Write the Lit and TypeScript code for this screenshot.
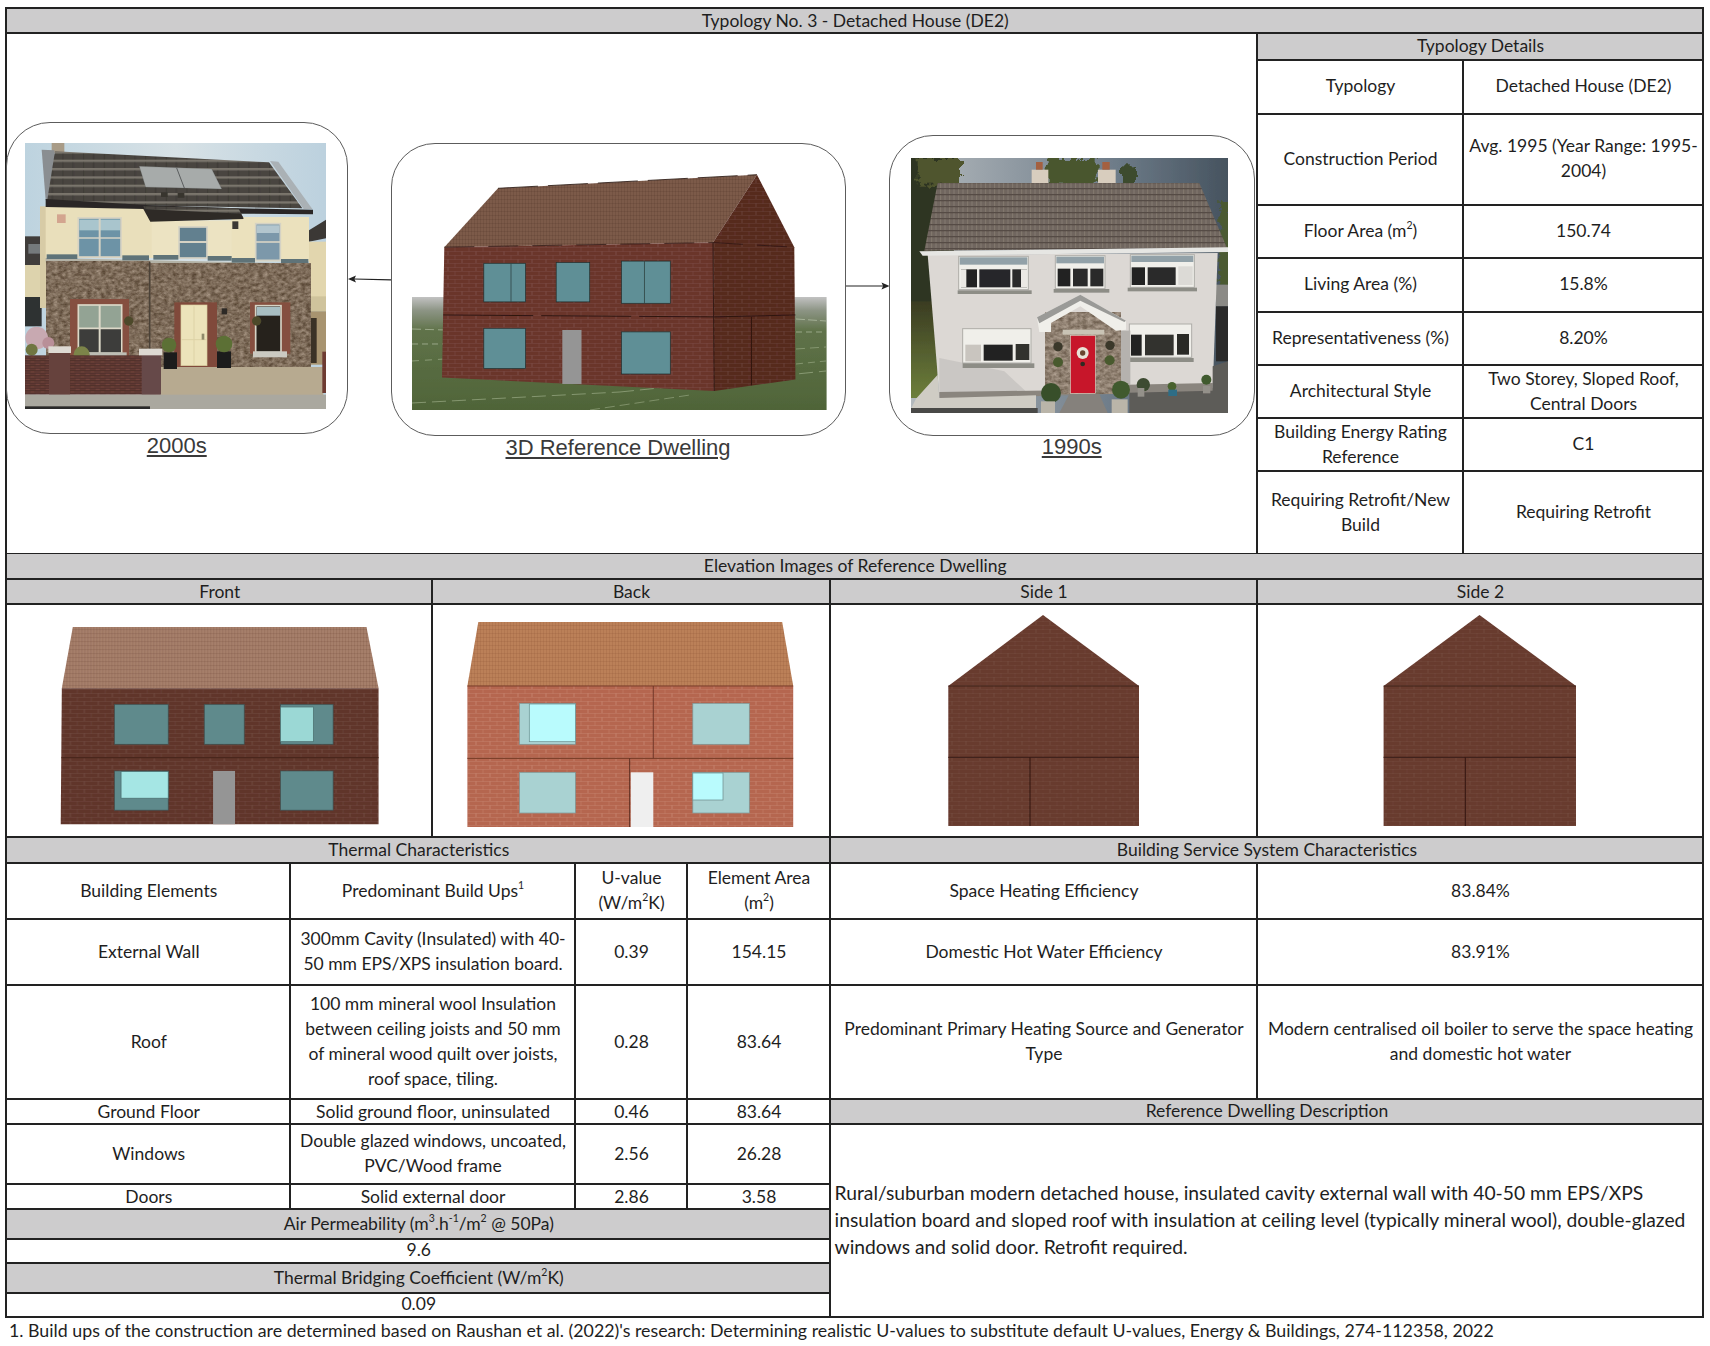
import { LitElement, css, html, svg } from 'lit'
import { customElement } from 'lit/decorators.js'

// small drawing helpers. Elevations and the model use page pixels as viewBox,
// the two photos use their own 3x grid so shapes could be read off the reference
const R = (x1: number, y1: number, x2: number, y2: number, fill: string, stroke = 'none', sw = 0.7) =>
  svg`<rect x=${x1} y=${y1} width=${x2 - x1} height=${y2 - y1} fill=${fill} stroke=${stroke} stroke-width=${sw} />`
const P = (pts: string, fill: string, stroke = 'none') =>
  svg`<polygon points=${pts} fill=${fill} stroke=${stroke} stroke-width="0.7" />`
const L = (x1: number, y1: number, x2: number, y2: number, color: string, w = 1, dash = '') =>
  svg`<line x1=${x1} y1=${y1} x2=${x2} y2=${y2} stroke=${color} stroke-width=${w} stroke-dasharray=${dash} />`
const C = (x: number, y: number, r: number, fill: string) => svg`<circle cx=${x} cy=${y} r=${r} fill=${fill} />`

const patterns = (id: string, mortar: string, tile: string) => svg`
  <defs>
    <pattern id="brick-${id}" width="14" height="8" patternUnits="userSpaceOnUse">
      <path d="M0 .5H14M0 4.5H14M7 .5V4.5M.5 4.5V8.5M13.5 4.5V8.5" stroke=${mortar} stroke-width="0.6" fill="none" />
    </pattern>
    <pattern id="tile-${id}" width="3" height="4" patternUnits="userSpaceOnUse">
      <path d="M.5 0V4M0 .5H3" stroke=${tile} stroke-width="0.6" fill="none" />
    </pattern>
    <filter id="soft-${id}"><feGaussianBlur stdDeviation="0.4" /></filter>
  </defs>`

// front elevation
const frontView = html`
  <svg viewBox="6.5 604 424 231">
    ${patterns('f', 'rgba(255,255,255,.09)', 'rgba(80,40,25,.22)')}
    <g filter="url(#soft-f)">
      ${P('72.4,626 366.4,626 378.5,687.3 61.4,687.3', '#a67f6b')}
      ${P('72.4,626 366.4,626 378.5,687.3 61.4,687.3', 'url(#tile-f)')}
      ${P('61.4,687.3 378.5,687.3 378.5,823.3 60.3,823.3', '#60352a')}
      ${P('61.4,687.3 378.5,687.3 378.5,823.3 60.3,823.3', 'url(#brick-f)')}
      ${L(61, 756.7, 378.5, 756.7, '#4a251b', 1.4)}
      ${R(114.1, 703.3, 167.9, 743.3, '#5f8a8c', '#3f4f4f')}
      ${R(204, 703.3, 244, 743.3, '#5f8a8c', '#3f4f4f')}
      ${R(280.3, 703.3, 333, 743.3, '#5f8a8c', '#3f4f4f')}
      ${R(280.3, 706, 313.2, 740.7, '#9bd8d5', '#4b6d6d')}
      ${R(114.1, 770, 167.9, 809.3, '#5f8a8c', '#3f4f4f')}
      ${R(120.7, 770.7, 167.9, 797.3, '#a5e6e4', '#4b6d6d')}
      ${R(280.3, 770, 333, 809.3, '#5f8a8c', '#3f4f4f')}
      ${R(212.8, 770, 234.8, 823.3, '#959595')}
    </g>
  </svg>`

// back elevation
const backView = html`
  <svg viewBox="433.5 604 395 231">
    ${patterns('b', 'rgba(255,235,220,.17)', 'rgba(110,55,25,.2)')}
    <g filter="url(#soft-b)">
      ${P('478.3,621 782.2,621 793.2,685 467.4,685', '#bb8058')}
      ${P('478.3,621 782.2,621 793.2,685 467.4,685', 'url(#tile-b)')}
      ${R(467.4, 685, 793.2, 826, '#b5664f')}
      ${R(467.4, 685, 793.2, 826, 'url(#brick-b)')}
      ${L(467.4, 685, 793.2, 685, '#7d3f2c', 1)}
      ${L(467.4, 757.3, 793.2, 757.3, '#7d3f2c', 1.3)}
      ${L(653.3, 685, 653.3, 757.3, '#6d3626', 0.9)}
      ${L(629.7, 757.3, 629.7, 826, '#5a2c1f', 1)}
      ${R(519.5, 702.3, 575.4, 743.3, '#a9d2d2', '#7b9595')}
      ${R(529.3, 703, 575.4, 740.7, '#b9fbfd', '#6b8b8b')}
      ${R(692.8, 702.3, 749.3, 743.3, '#a9d2d2', '#7b9595')}
      ${R(519.5, 771.3, 575.4, 812, '#a9d2d2', '#7b9595')}
      ${R(692.8, 771.3, 749.3, 812, '#a9d2d2', '#7b9595')}
      ${R(692.8, 772, 723, 799, '#b9fbfd', '#6b8b8b')}
      ${R(630.8, 771.3, 653.3, 826, '#efefef')}
    </g>
  </svg>`

// the two gable sides only differ in where they sit
const sideView = (id: string, vb: string, apex: number, left: number, right: number, door: number) => html`
  <svg viewBox=${vb}>
    ${patterns(id, 'rgba(255,255,255,.07)', 'rgba(0,0,0,.1)')}
    <g filter="url(#soft-${id})">
      ${P(`${apex},614 ${right},685 ${right},825 ${left},825 ${left},685`, '#673a2e')}
      ${P(`${apex},614 ${right},685 ${right},825 ${left},825 ${left},685`, `url(#brick-${id})`)}
      ${L(left, 685, right, 685, '#41201a', 1.2)}
      ${L(left, 756.3, right, 756.3, '#41201a', 1.3)}
      ${L(door, 756.3, door, 825, '#33170f', 1)}
    </g>
  </svg>`

// the big 3D render in the middle
const model = html`
  <svg width="415" height="239.4" viewBox="412 172 415 239.4">
    <defs>
      <linearGradient id="field" x1="0" y1="0" x2="0" y2="1">
        <stop offset="0" stop-color="#c2c2c2" />
        <stop offset=".12" stop-color="#8c9484" />
        <stop offset=".3" stop-color="#5f7249" />
        <stop offset="1" stop-color="#4f6438" />
      </linearGradient>
    </defs>
    ${patterns('m', 'rgba(255,255,255,.09)', 'rgba(60,30,15,.22)')}
    <g filter="url(#soft-m)">
      ${R(412, 298, 826.6, 411.4, 'url(#field)')}
      ${L(412, 404, 620, 393, 'rgba(190,205,170,.6)', 0.8, '14 6')} ${L(620, 393, 826, 372, 'rgba(190,205,170,.6)', 0.8, '14 6')}
      ${L(590, 411, 690, 396, 'rgba(190,205,170,.6)', 0.7, '10 5')} ${L(412, 330, 445, 331, 'rgba(200,210,185,.7)', 0.8, '9 4')}
      ${L(412, 345, 445, 345, 'rgba(200,210,185,.7)', 0.8, '6 4')} ${L(412, 362, 445, 360, 'rgba(190,205,170,.6)', 0.8, '7 6')}
      ${L(796, 320, 826, 322, 'rgba(200,210,185,.7)', 0.8, '9 3')} ${L(796, 333, 826, 333, 'rgba(200,210,185,.7)', 0.8, '6 4')}
      ${L(796, 350, 826, 348, 'rgba(190,205,170,.6)', 0.7, '9 5')} ${L(796, 365, 826, 362, 'rgba(190,205,170,.6)', 0.7, '7 5')}
      ${P('498,189.3 757,175.7 713,243.6 444.3,248.2', '#7b5a4a')}
      ${P('498,189.3 757,175.7 713,243.6 444.3,248.2', 'url(#tile-m)')}
      ${P('444.3,248.2 713,243.6 714.2,392 442,378.6', '#6a352c')}
      ${P('444.3,248.2 713,243.6 714.2,392 442,378.6', 'url(#brick-m)')}
      ${P('757,175.7 794.3,248.2 795.4,380.4 714.2,392 713,243.6', '#56291f')}
      ${P('757,175.7 794.3,248.2 795.4,380.4 714.2,392 713,243.6', 'url(#brick-m)')}
      ${L(713, 243.6, 714.2, 392, '#2e1510', 0.9)}
      ${L(443.2, 316, 714.2, 317.9, '#2e1510', 1, '90 8')} ${L(714.2, 317.9, 795.4, 316, '#2e1510', 1)}
      ${L(751.5, 317.9, 751.5, 386.4, '#2e1510', 0.9)}
      ${L(444.3, 248.2, 713, 243.6, '#2e1510', 0.8, '30 14')} ${L(713, 243.6, 794.3, 248.2, '#2e1510', 0.8, '30 14')}
      ${L(498, 189.3, 757, 175.7, '#33231c', 0.9, '40 10')}
      ${R(483.8, 264.3, 525.5, 302.9, '#5f8f96', '#20302f')} ${L(511, 264.3, 511, 302.9, '#2e4241', 0.8)}
      ${R(556.2, 263.6, 589.7, 302.9, '#5f8f96', '#20302f')}
      ${R(621.5, 262.1, 670.3, 304.3, '#5f8f96', '#20302f')} ${L(644.5, 262.1, 644.5, 304.3, '#2e4241', 0.8)}
      ${R(483.8, 329.3, 525.5, 369.6, '#5f8f96', '#20302f')}
      ${R(621.5, 332.9, 670.3, 375, '#5f8f96', '#20302f')}
      ${R(562.3, 331, 581.5, 385, '#959595')}
    </g>
  </svg>`

// photo of the 2000s house, redrawn on a 903x798 grid
const photo2000 = html`
  <svg width="301" height="266" viewBox="0 0 903 798">
    <defs>
      <filter id="soft2000"><feGaussianBlur stdDeviation="1.7" /></filter>
      <filter id="stoneNoise" x="0" y="0" width="1" height="1" color-interpolation-filters="sRGB">
        <feTurbulence type="fractalNoise" baseFrequency=".07 .1" numOctaves="3" seed="4" />
        <feColorMatrix values=".42 0 0 0 .28  .42 0 0 0 .21  .42 0 0 0 .14  0 0 0 0 1" />
      </filter>
      <pattern id="slate" width="62" height="25" patternUnits="userSpaceOnUse">
        <rect width="62" height="25" fill="#48443f" />
        <rect width="62" height="7" fill="#7a756c" />
        <path d="M20 7V25M52 7V25" stroke="#383531" stroke-width="2" />
      </pattern>
      <pattern id="lowbrick" width="30" height="15" patternUnits="userSpaceOnUse">
        <rect width="30" height="15" fill="#5e3832" />
        <rect x="2" y="2" width="12" height="5" fill="#6f423a" />
        <rect x="17" y="9" width="11" height="5" fill="#6a3e37" />
        <path d="M0 .5H30M0 8H30" stroke="#412824" stroke-width="1.6" />
      </pattern>
      <linearGradient id="sky2000" x1="0" y1="0" x2="1" y2="0">
        <stop offset="0" stop-color="#bdd3df" />
        <stop offset=".5" stop-color="#d8e2e6" />
        <stop offset="1" stop-color="#bcd1de" />
      </linearGradient>
    </defs>
    <g filter="url(#soft2000)">
      ${R(0, 0, 903, 798, 'url(#sky2000)')}
      ${R(0, 280, 50, 366, '#3f3c3a')} ${R(10, 303, 48, 332, '#757a7c')}
      ${R(0, 366, 50, 462, '#ddd3ad')} ${R(0, 462, 50, 550, '#2f3033')}
      ${P('852,262 903,230 903,286 852,296', '#3a3836')}
      ${R(852, 296, 903, 505, '#e2d6ae')} ${R(855, 460, 903, 505, '#cfc39c')} ${R(855, 505, 903, 665, '#a8946f')}
      ${R(855, 525, 875, 660, '#3b3026')}
      ${R(80, 0, 118, 30, '#a89b87')}
      ${P('50,20 88,22 102,168 62,172', '#8a8e91')}
      ${P('90,25 732,58 832,196 65,182', 'url(#slate)')}
      ${P('735,54 760,56 862,198 836,198', '#aab1b5')}
      ${P('343,70 560,78 590,138 362,132', '#a7abaa', '#66696a')} ${L(455, 75, 478, 135, '#5a5d5e', 3)}
      ${R(408, 148, 428, 162, '#37352f')} ${R(458, 150, 478, 164, '#37352f')}
      ${R(45, 190, 66, 495, '#d7cba6')}
      ${R(62, 192, 382, 345, '#e9dfbb')} ${R(380, 232, 622, 345, '#ece3c2')} ${R(620, 222, 852, 355, '#ebe1bd')}
      ${P('62,168 362,186 640,196 864,200 864,214 640,212 360,198 62,192', '#2a2725')}
      ${P('355,190 640,196 656,226 376,234', 'url(#slate)')}
      ${P('355,198 648,212 656,228 376,236', '#2d2a27')}
      ${R(622, 235, 640, 258, '#3a3835')} ${R(96, 214, 122, 240, '#d3a58f')}
      ${R(160, 225, 288, 342, '#6d93a6', '#d5d2c4', 5)} ${R(163, 230, 285, 262, '#a9c5cd')}
      ${L(224, 226, 224, 342, '#d5d2c4', 6)} ${L(160, 285, 288, 285, '#d5d2c4', 5)}
      ${R(462, 252, 546, 345, '#62808f', '#d5d2c4', 5)} ${L(462, 297, 546, 297, '#d5d2c4', 6)}
      ${R(692, 242, 766, 352, '#7b98aa', '#d5d2c4', 5)} ${R(695, 247, 763, 270, '#b3c6ce')} ${L(692, 297, 766, 297, '#d5d2c4', 5)}
      ${P('62,345 852,362 852,372 62,358', '#b3b2a6')}
      ${R(65, 334, 157, 348, '#5f7378')} ${R(292, 337, 372, 352, '#5f7378')} ${R(385, 336, 460, 350, '#5f7378')}
      ${R(548, 339, 620, 353, '#5f7378')} ${R(620, 345, 690, 359, '#5f7378')} ${R(768, 348, 850, 362, '#5f7378')}
      <rect x="65" y="356" width="310" height="300" filter="url(#stoneNoise)" />
      <rect x="375" y="362" width="481" height="312" filter="url(#stoneNoise)" />
      ${L(374, 356, 374, 670, '#4c4237', 5)}
      ${R(135, 468, 312, 640, '#85503f')} ${R(160, 486, 290, 630, '#93a394', '#dcd8c8', 5)}
      ${R(163, 556, 288, 628, '#3d3d3a')} ${L(224, 486, 224, 630, '#dcd8c8', 6)} ${L(160, 556, 290, 556, '#dcd8c8', 5)}
      ${R(190, 628, 305, 646, '#bdbdb4')}
      ${R(448, 478, 576, 672, '#80493a')}
      ${R(468, 486, 546, 668, '#ece3ba', '#d9cf9f', 2)} ${L(507, 490, 507, 665, '#ddd2a6', 3)} ${L(470, 590, 544, 590, '#ddd2a6', 3)}
      ${R(530, 572, 538, 590, '#8f8a6b')}
      ${R(675, 478, 796, 632, '#85503f')}
      ${R(692, 488, 768, 628, '#25211f', '#d6d3c5', 5)} ${R(695, 492, 765, 518, '#a8bec2')}
      ${R(684, 625, 786, 643, '#cbcac2')}
      ${R(590, 496, 606, 514, '#2d2a27')}
      ${C(311, 534, 14, '#4d4a2a')} ${C(695, 534, 14, '#4d4a2a')}
      ${R(405, 672, 895, 762, '#b7aa90')}
      ${R(416, 628, 456, 678, '#1f1e1c')} ${C(432, 606, 22, '#5c6f36')}
      ${R(576, 625, 618, 675, '#1f1e1c')} ${C(597, 603, 25, '#5c6f36')}
      ${C(170, 634, 24, '#7c8448')}
      ${C(35, 585, 34, '#c8a9b1')} ${C(70, 600, 18, '#b98f98')} ${C(20, 620, 18, '#6f7642')}
      ${R(0, 637, 405, 755, 'url(#lowbrick)')}
      ${R(72, 628, 135, 755, '#66423c')} ${R(350, 636, 408, 755, '#66484a')}
      ${R(70, 610, 138, 630, '#dedad3')} ${R(342, 617, 412, 637, '#dedad3')}
      ${R(892, 626, 903, 750, '#6e3a33')}
      ${R(0, 755, 903, 798, '#aaa89f')} ${R(0, 790, 375, 798, '#2b2b29')}
    </g>
  </svg>`

// photo of the 1990s house, redrawn on a 951x765 grid
const photo1990 = html`
  <svg width="317" height="255" viewBox="0 0 951 765">
    <defs>
      <filter id="soft1990"><feGaussianBlur stdDeviation="1.6" /></filter>
      <filter id="leafy" x="-10%" y="-10%" width="120%" height="120%">
        <feTurbulence type="fractalNoise" baseFrequency=".05" numOctaves="3" seed="7" result="n" />
        <feDisplacementMap in="SourceGraphic" in2="n" scale="34" />
      </filter>
      <filter id="porchNoise" x="0" y="0" width="1" height="1" color-interpolation-filters="sRGB">
        <feTurbulence type="fractalNoise" baseFrequency=".07 .09" numOctaves="3" seed="11" />
        <feColorMatrix values=".4 0 0 0 .36  .4 0 0 0 .3  .4 0 0 0 .24  0 0 0 0 1" />
      </filter>
      <pattern id="rooftile" width="27" height="18" patternUnits="userSpaceOnUse">
        <rect width="27" height="18" fill="#70665e" />
        <rect width="27" height="4" fill="#544b45" />
        <path d="M8 4V18M21 4V18" stroke="#847a70" stroke-width="3" />
      </pattern>
      <linearGradient id="sky1990" x1="0" y1="0" x2="1" y2="0">
        <stop offset="0" stop-color="#b3b9bd" />
        <stop offset=".65" stop-color="#6d7b88" />
        <stop offset="1" stop-color="#46535f" />
      </linearGradient>
      <linearGradient id="grass1990" x1="0" y1="0" x2="0" y2="1">
        <stop offset="0" stop-color="#3a3c22" />
        <stop offset="1" stop-color="#6d7f3b" />
      </linearGradient>
    </defs>
    <g filter="url(#soft1990)">
      ${R(0, 0, 951, 765, 'url(#sky1990)')}
      <g filter="url(#leafy)">
        ${R(-10, -10, 130, 440, '#2f3522')} ${R(20, 0, 150, 80, '#50552d')}
        ${R(410, 0, 560, 80, '#48572f')} ${R(630, 22, 675, 80, '#3c4b2d')} ${R(925, 130, 960, 380, '#4b5a30')}
      </g>
      ${R(0, 430, 80, 720, 'url(#grass1990)')}
      ${R(915, 380, 951, 445, '#8b8a86')} ${R(915, 445, 951, 610, '#2c2c2a')}
      ${R(362, 35, 412, 92, '#d8cdbe')} ${R(375, 12, 395, 35, '#a4603f')} ${R(358, 84, 416, 98, '#a9a398')}
      ${R(561, 35, 614, 92, '#d8cdbe')} ${R(574, 12, 596, 35, '#a4603f')} ${R(558, 84, 618, 98, '#a9a398')}
      ${P('80,75 865,75 948,270 40,278', 'url(#rooftile)')}
      ${P('50,290 920,285 905,695 85,710', '#dcd8d4')}
      ${P('85,600 280,640 350,705 85,710', 'rgba(110,110,110,.16)')}
      ${P('25,280 951,268 951,282 35,293', '#e6e6e3')}
      ${R(143, 295, 352, 395, '#f0efea', '#aeada8', 3)} ${R(146, 298, 349, 320, '#92a1a8')}
      ${R(150, 334, 198, 388, '#232321')} ${R(205, 334, 298, 388, '#27272a')} ${R(304, 334, 348, 388, '#2b2a29')}
      ${R(150, 334, 166, 388, '#ebe9e4')} ${R(330, 334, 348, 388, '#ebe9e4')}
      ${R(433, 293, 582, 392, '#f0efea', '#aeada8', 3)} ${R(436, 296, 579, 316, '#92a1a8')}
      ${R(440, 332, 478, 385, '#232321')} ${R(486, 332, 530, 385, '#2b2b2a')} ${R(538, 332, 577, 385, '#2b2a29')}
      ${R(658, 290, 850, 388, '#f0efea', '#aeada8', 3)} ${R(661, 293, 847, 312, '#92a1a8')}
      ${R(662, 328, 702, 381, '#232321')} ${R(710, 328, 794, 381, '#2b2b2a')} ${R(802, 325, 845, 381, '#dcdad6')}
      ${R(140, 397, 362, 408, '#8d8d86')} ${R(428, 393, 595, 404, '#8d8d86')} ${R(650, 389, 858, 400, '#8d8d86')}
      ${R(155, 512, 360, 615, '#f0efea', '#aeada8', 3)}
      ${R(163, 560, 210, 610, '#c9c5bf')} ${R(218, 560, 305, 608, '#232321')} ${R(314, 558, 355, 606, '#33322f')}
      ${R(655, 498, 842, 598, '#f0efea', '#aeada8', 3)}
      ${R(660, 530, 692, 593, '#232321')} ${R(702, 530, 788, 592, '#33322f')} ${R(798, 528, 834, 590, '#2b2a28')}
      ${R(155, 616, 370, 630, '#8d8d86')} ${R(655, 600, 848, 612, '#8d8d86')}
      ${R(628, 518, 658, 680, '#b5b2ae')}
      ${P('85,702 905,690 905,700 85,722', '#8a857e')}
      ${P('650,680 905,675 905,702 650,705', '#8a857e')}
      <polygon points="402,520 508,462 628,520 628,706 402,706" filter="url(#porchNoise)" />
      ${P('378,478 508,410 645,488 645,515 615,518 508,445 420,495 420,522 385,522', '#f0efea')}
      ${P('378,478 508,410 645,488 640,492 508,428 385,496', '#9a9a97')}
      ${R(455, 515, 580, 530, '#c9c3b5')}
      ${R(478, 532, 553, 706, '#c7192b', '#d9d2c4', 2)}
      ${C(515, 585, 18, '#e8e2d6')} ${C(515, 585, 8, '#69452f')} ${C(515, 618, 7, '#2d2c22')}
      ${C(441, 566, 14, '#3a382c')} ${C(597, 562, 14, '#3a382c')} ${C(441, 613, 15, '#4a5a2f')} ${C(596, 607, 15, '#4a5a2f')}
      ${P('15,722 80,650 85,720 375,712 375,750 0,752', '#cfccc4')}
      ${R(0, 750, 380, 765, '#4a4a46')}
      ${P('475,708 565,708 590,765 445,765', '#85817b')}
      ${P('655,704 905,698 905,625 951,610 951,765 655,765', '#5d5b58')}
      ${C(420, 705, 30, '#38502b')} ${R(390, 730, 432, 765, '#bab5a9')}
      ${C(630, 695, 27, '#415a2d')} ${R(602, 724, 650, 765, '#bab5a9')}
      ${C(697, 680, 20, '#3c4b31')} ${R(680, 690, 700, 716, '#94918a')}
      ${C(783, 685, 13, '#48622f')} ${R(772, 695, 798, 714, '#2f6d86')}
      ${C(886, 665, 15, '#3f5a2e')} ${R(876, 684, 898, 706, '#94918a')}
    </g>
  </svg>`

@customElement('app-root')
export class AppRoot extends LitElement {
  static styles = css`
    :host {
      display: block;
      background: #fff;
      height: 1346px;
      font-family: Lato, 'Liberation Sans', sans-serif;
      font-size: 17.5px;
      line-height: 25px;
      color: #1e1e1e;
    }
    * { box-sizing: border-box; }
    svg { display: block; }
    sup { font-size: 0.6em; line-height: 0; vertical-align: 0.72em; }

    .sheet {
      width: 1698.5px;
      margin: 7px 0 0 5px;
      border-top: 2px solid #222;
      border-left: 2px solid #222;
    }
    .cell {
      display: flex;
      align-items: center;
      justify-content: center;
      text-align: center;
      border-right: 2px solid #222;
      border-bottom: 2px solid #222;
      padding: 0 1px 2px 3px;
      overflow: hidden;
    }
    .head { background: #cdcccd; }
    .title { height: 25px; padding-bottom: 0; }
    .flush { padding-bottom: 0; }

    .top { display: grid; grid-template-columns: 1250.5px 446px; height: 520px; }
    .stage { display: flex; align-items: flex-start; border-right: 2px solid #222; border-bottom: 2px solid #222; }
    .figure { display: flex; flex-direction: column; align-items: center; flex: none; }
    .card { border: 1.5px solid #5c5c5c; border-radius: 44px; background: #fff; }
    .caption {
      font-family: 'Liberation Sans', Arial, sans-serif;
      font-size: 22px;
      line-height: 26px;
      color: #3a3a3a;
      text-decoration: underline;
    }
    .fig-a { width: 341.5px; margin: 87.5px 0 0 -1px; }
    .fig-a .card { width: 341.5px; height: 312.5px; padding: 20px 0 0 18px; }
    .fig-a .caption { margin-top: -1px; }
    .fig-b { width: 455px; margin-top: 108.5px; }
    .fig-b .card { width: 455px; height: 293.5px; padding: 27px 0 0 20.5px; }
    .fig-b .caption { margin-top: -1px; }
    .fig-c { width: 365.5px; margin-top: 100.5px; }
    .fig-c .card { width: 365.5px; height: 301px; padding: 22.5px 0 0 20.5px; }
    .fig-c .caption { margin-top: -2px; }
    .arrow { flex: none; height: 10px; }
    .arrow-a { width: 43px; margin-top: 239.5px; }
    .arrow-b { width: 43.5px; margin-top: 246.5px; }

    .details { display: grid; grid-template-columns: 206px 240px; grid-template-rows: 27px 53.5px 91.5px 53.3px 53.4px 53.3px 53.3px 53px 82.7px; }
    .details .head { grid-column: 1 / 3; }

    .elev { display: grid; grid-template-columns: 425.5px 398px 427px 446px; }
    .elev .wide { grid-column: 1 / 5; height: 26px; }
    .elev .label { height: 25px; padding-bottom: 0; }
    .elev .view { height: 233px; padding: 0; align-items: stretch; }
    .elev svg { width: 100%; height: 100%; }

    .lower {
      display: grid;
      grid-template-columns: 283.5px 285px 112px 143px 427px 446px;
      grid-template-rows: 26px 56.3px 65.7px 114.3px 24.7px 60.3px 24.7px 29.7px 24.6px 29.4px 24.3px;
    }
    .left-wide { grid-column: 1 / 5; }
    .right-wide { grid-column: 5 / 7; }
    .description {
      grid-column: 5 / 7;
      grid-row: 6 / 12;
      justify-content: flex-start;
      text-align: left;
      font-size: 19.3px;
      line-height: 27.3px;
      padding: 0 0 2px 4px;
      white-space: nowrap;
    }
    .note { font-size: 17.8px; line-height: 25px; margin: 0 0 0 9px; white-space: nowrap; }
  `

  render() {
    return html`
      <div class="sheet">
        <div class="cell head title">Typology No. 3 - Detached House (DE2)</div>

        <div class="top">
          <div class="stage">
            <div class="figure fig-a">
              <div class="card">${photo2000}</div>
              <div class="caption">2000s</div>
            </div>
            <svg class="arrow arrow-a" viewBox="0 0 43 10">
              <path d="M43 5.8 L6 5" stroke="#222" stroke-width="1.2" fill="none" />
              <path d="M0 5 L8 1.4 L6.4 5 L8 8.6 Z" fill="#222" />
            </svg>
            <div class="figure fig-b">
              <div class="card">${model}</div>
              <div class="caption">3D Reference Dwelling</div>
            </div>
            <svg class="arrow arrow-b" viewBox="0 0 43.5 10">
              <path d="M0 5 H38" stroke="#222" stroke-width="1.2" fill="none" />
              <path d="M43.5 5 L35.5 1.4 L37.1 5 L35.5 8.6 Z" fill="#222" />
            </svg>
            <div class="figure fig-c">
              <div class="card">${photo1990}</div>
              <div class="caption">1990s</div>
            </div>
          </div>
          <div class="details">
            <div class="cell head">Typology Details</div>
            <div class="cell">Typology</div>
            <div class="cell">Detached House (DE2)</div>
            <div class="cell">Construction Period</div>
            <div class="cell"><span>Avg. 1995 (Year Range: 1995-<br />2004)</span></div>
            <div class="cell"><span>Floor Area (m<sup>2</sup>)</span></div>
            <div class="cell">150.74</div>
            <div class="cell">Living Area (%)</div>
            <div class="cell">15.8%</div>
            <div class="cell">Representativeness (%)</div>
            <div class="cell">8.20%</div>
            <div class="cell">Architectural Style</div>
            <div class="cell"><span>Two Storey, Sloped Roof,<br />Central Doors</span></div>
            <div class="cell"><span>Building Energy Rating<br />Reference</span></div>
            <div class="cell">C1</div>
            <div class="cell"><span>Requiring Retrofit/New<br />Build</span></div>
            <div class="cell">Requiring Retrofit</div>
          </div>
        </div>

        <div class="elev">
          <div class="cell head wide">Elevation Images of Reference Dwelling</div>
          <div class="cell head label">Front</div>
          <div class="cell head label">Back</div>
          <div class="cell head label">Side 1</div>
          <div class="cell head label">Side 2</div>
          <div class="cell view">${frontView}</div>
          <div class="cell view">${backView}</div>
          <div class="cell view">${sideView('s1', '831.5 604 424 231', 1043, 948.3, 1139, 1030)}</div>
          <div class="cell view">${sideView('s2', '1258.5 604 443 231', 1479.5, 1383.6, 1576, 1465.3)}</div>
        </div>

        <div class="lower">
          <div class="cell head left-wide">Thermal Characteristics</div>
          <div class="cell head right-wide">Building Service System Characteristics</div>

          <div class="cell">Building Elements</div>
          <div class="cell"><span>Predominant Build Ups<sup>1</sup></span></div>
          <div class="cell"><span>U-value<br />(W/m<sup>2</sup>K)</span></div>
          <div class="cell"><span>Element Area<br />(m<sup>2</sup>)</span></div>
          <div class="cell">Space Heating Efficiency</div>
          <div class="cell">83.84%</div>

          <div class="cell">External Wall</div>
          <div class="cell"><span>300mm Cavity (Insulated) with 40-<br />50 mm EPS/XPS insulation board.</span></div>
          <div class="cell">0.39</div>
          <div class="cell">154.15</div>
          <div class="cell">Domestic Hot Water Efficiency</div>
          <div class="cell">83.91%</div>

          <div class="cell">Roof</div>
          <div class="cell"><span>100 mm mineral wool Insulation<br />between ceiling joists and 50 mm<br />of mineral wood quilt over joists,<br />roof space, tiling.</span></div>
          <div class="cell">0.28</div>
          <div class="cell">83.64</div>
          <div class="cell"><span>Predominant Primary Heating Source and Generator<br />Type</span></div>
          <div class="cell"><span>Modern centralised oil boiler to serve the space heating<br />and domestic hot water</span></div>

          <div class="cell flush">Ground Floor</div>
          <div class="cell flush">Solid ground floor, uninsulated</div>
          <div class="cell flush">0.46</div>
          <div class="cell flush">83.64</div>
          <div class="cell head right-wide">Reference Dwelling Description</div>

          <div class="cell">Windows</div>
          <div class="cell"><span>Double glazed windows, uncoated,<br />PVC/Wood frame</span></div>
          <div class="cell">2.56</div>
          <div class="cell">26.28</div>
          <div class="cell description"><span>Rural/suburban modern detached house, insulated cavity external wall with 40-50 mm EPS/XPS<br />insulation board and sloped roof with insulation at ceiling level (typically mineral wool), double-glazed<br />windows and solid door. Retrofit required.</span></div>

          <div class="cell flush">Doors</div>
          <div class="cell flush">Solid external door</div>
          <div class="cell flush">2.86</div>
          <div class="cell flush">3.58</div>

          <div class="cell head left-wide flush"><span>Air Permeability (m<sup>3</sup>.h<sup>-1</sup>/m<sup>2</sup> @ 50Pa)</span></div>
          <div class="cell left-wide">9.6</div>
          <div class="cell head left-wide flush"><span>Thermal Bridging Coefficient (W/m<sup>2</sup>K)</span></div>
          <div class="cell left-wide">0.09</div>
        </div>
      </div>
      <div class="note">1. Build ups of the construction are determined based on Raushan et al. (2022)'s research: Determining realistic U-values to substitute default U-values, Energy &amp; Buildings, 274-112358, 2022</div>
    `
  }
}
